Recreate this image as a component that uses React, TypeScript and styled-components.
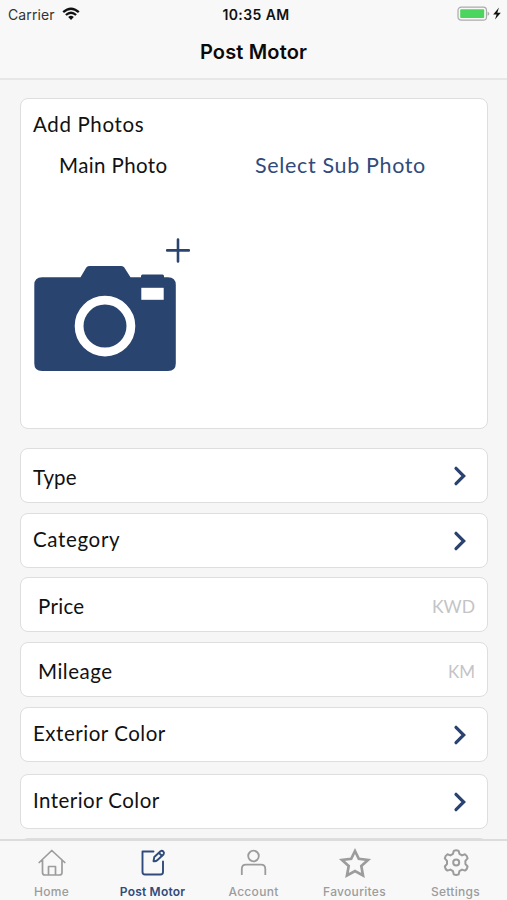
import React from "react";
import styled, { createGlobalStyle } from "styled-components";

const NAVY = "#2a4470";

const GlobalStyle = createGlobalStyle`
  *, *::before, *::after { box-sizing: border-box; }
  body { margin: 0; background: #f6f6f6; font-family: Lato, "Open Sans", sans-serif; }
`;

const Screen = styled.div`
  width: 507px;
  height: 900px;
  display: flex;
  flex-direction: column;
  overflow: hidden;
  background: #f6f6f6;
  color: #111;
`;

const Header = styled.header`
  flex: none;
  height: 80px;
  background: #f8f8f8;
  border-bottom: 2px solid #e7e7e7;
  font-family: Inter, sans-serif;
`;

const StatusBar = styled.div`
  height: 28px;
  padding: 0 5px 0 8px;
  display: grid;
  grid-template-columns: 1fr auto 1fr;
  align-items: center;
`;

const Carrier = styled.div`
  display: flex;
  align-items: center;
  gap: 7px;
  font-size: 14px;
  letter-spacing: 0.1px;
  color: #333;
`;

const Clock = styled.div`
  font-size: 14px;
  font-weight: 600;
  letter-spacing: 0.4px;
  padding-left: 2px;
`;

const Battery = styled.div`
  display: flex;
  justify-content: flex-end;
`;

const Title = styled.h1`
  margin: 0;
  padding-top: 11px;
  font-size: 20px;
  line-height: 26px;
  font-weight: 600;
  letter-spacing: 0.15px;
  text-align: center;
  color: #0a0a0a;
`;

const Content = styled.main`
  flex: 1;
  min-height: 0;
  overflow: hidden;
  padding: 18px 19px 0 20px;
`;

const Card = styled.section`
  background: #fff;
  border: 1px solid #dedede;
  border-radius: 8px;
`;

const PhotoCard = styled(Card)`
  height: 331px;
  padding: 11px 12px 0;
`;

const Label = styled.span<{ $spacing?: number; $color?: string; $size?: number }>`
  font-size: ${(p) => p.$size ?? 20.5}px;
  line-height: 28px;
  white-space: nowrap;
  letter-spacing: ${(p) => p.$spacing ?? 0.3}px;
  color: ${(p) => p.$color ?? "#111"};
`;

const PhotoHeadings = styled.div`
  display: grid;
  grid-template-columns: 196px 1fr;
  padding: 13px 0 0 26px;
`;

const PhotoPicker = styled.div`
  margin-top: 56px;
  height: 140px;
`;

const Rows = styled.div`
  display: flex;
  flex-direction: column;
  padding-top: 19px;
`;

const Row = styled(Card)<{ $gap?: number; $inset?: number; $drop?: number; $lift?: number }>`
  flex: none;
  height: 55px;
  margin-bottom: ${(p) => p.$gap ?? 10}px;
  padding: 0 12px 0 ${(p) => p.$inset ?? 12}px;
  display: flex;
  align-items: center;
  justify-content: space-between;

  & > ${Label} {
    padding-top: ${(p) => p.$drop ?? 0}px;
    padding-bottom: ${(p) => p.$lift ?? 0}px;
  }
`;

const ClippedLabel = styled(Label)`
  height: 26px;
  line-height: 29px;
  overflow: hidden;
`;

const Unit = styled.span<{ $size: number }>`
  font-size: ${(p) => p.$size}px;
  line-height: 24px;
  padding-top: 5px;
  color: #c4c4c6;
`;

const TabBar = styled.nav`
  flex: none;
  height: 61px;
  display: grid;
  grid-template-columns: repeat(5, 101px);
  background: #f8f8f8;
  border-top: 2px solid #dcdcdc;
  font-family: Inter, sans-serif;
`;

const Tab = styled.a<{ $active?: boolean }>`
  display: flex;
  flex-direction: column;
  align-items: center;
  padding: 4px 0 0 2px;
  color: ${(p) => (p.$active ? "#304b7b" : "#9c9c9c")};
  font-size: 12px;
  line-height: 16px;
  font-weight: ${(p) => (p.$active ? 600 : 500)};
  letter-spacing: ${(p) => (p.$active ? 0.2 : 0.3)}px;
  white-space: nowrap;
  gap: 5px;
`;

const Icon = styled.svg`
  display: block;
  flex: none;
  overflow: visible;
`;

const Arrow = styled(Icon)`
  margin-right: 8px;
`;

const Chevron = () => (
  <Arrow width="14" height="20" viewBox="0 0 14 20" fill="none" stroke="#29426f" strokeWidth="3.2" strokeLinecap="round">
    <path d="M3 2.300 10.700 10 3 17.700" />
  </Arrow>
);

const CameraIcon = () => (
  <Icon width="160" height="140" viewBox="33 235 160 140">
    <path
      fill={NAVY}
      d="M42 277.3H80.5L86.3 267.5Q87.200 266 89 266H121.500Q123.300 266 124.300 267.500L130.500 277.300H141V276Q141 274.500 142.500 274.500H162.500Q164 274.500 164 276V277.300H168Q175.800 277.300 175.800 285V363.500Q175.800 371 168 371H42Q34.300 371 34.300 363.500V285Q34.300 277.300 42 277.300Z"
    />
    <circle cx="105" cy="326.100" r="25.900" fill="none" stroke="#fff" strokeWidth="8.800" />
    <rect x="141.300" y="287.800" width="22.400" height="12" fill="#fff" />
    <path d="M167.200 250.400H188.800M178 239.500V261.400" fill="none" stroke={NAVY} strokeWidth="2.600" strokeLinecap="round" />
  </Icon>
);

interface SelectRowProps {
  label: string;
  gap?: number;
  drop?: number;
  lift?: number;
  spacing?: number;
}

const SelectRow = ({ label, gap, drop, lift, spacing }: SelectRowProps) => (
  <Row $gap={gap} $drop={drop} $lift={lift}>
    <Label $spacing={spacing}>{label}</Label>
    <Chevron />
  </Row>
);

const TabIcon = ({ children, width = 1.8 }: { children: React.ReactNode; width?: number }) => (
  <Icon width="34" height="34" viewBox="0 0 34 34" fill="none" stroke="currentColor" strokeWidth={width} strokeLinecap="round" strokeLinejoin="round">
    {children}
  </Icon>
);

export default function App() {
  return (
    <>
      <GlobalStyle />
      <Screen>
        <Header>
          <StatusBar>
            <Carrier>
              Carrier
              <Icon width="18" height="14" viewBox="0 0 18 14" fill="none" stroke="#111" strokeWidth="2.3">
                <path d="M1.200 5.200Q9-1.800 16.800 5.200M3.900 8Q9 3.600 14.100 8" />
                <path d="M6.200 10Q9 7.400 11.800 10L9 12.900Z" fill="#111" stroke="none" />
              </Icon>
            </Carrier>
            <Clock>10:35 AM</Clock>
            <Battery>
              <Icon width="46" height="16" viewBox="0 0 46 16">
                <rect x="2" y="1.200" width="28.500" height="13" rx="3.200" fill="#f8f8f8" stroke="#ababab" strokeWidth="1.200" />
                <rect x="4.200" y="3.300" width="24" height="8.800" rx="1" fill="#4cd55e" />
                <path d="M31.600 5.700Q33.300 6.300 33.300 7.700T31.600 9.700Z" fill="#aaa" />
                <path d="M43 1.600 37.200 8.500H40.600L39 13.600 44.800 6.800H41.300Z" fill="#111" />
              </Icon>
            </Battery>
          </StatusBar>
          <Title>Post Motor</Title>
        </Header>
        <Content>
          <PhotoCard>
            <Label $spacing={0.65}>Add Photos</Label>
            <PhotoHeadings>
              <Label $spacing={0.4}>Main Photo</Label>
              <Label $size={21.5} $spacing={0.65} $color="#304b7b">Select Sub Photo</Label>
            </PhotoHeadings>
            <PhotoPicker>
              <CameraIcon />
            </PhotoPicker>
          </PhotoCard>
          <Rows>
            <SelectRow label="Type" drop={2} spacing={0.1} />
            <SelectRow label="Category" gap={9} lift={4} spacing={0.65} />
            <Row $inset={17} $drop={3}>
              <Label>Price</Label>
              <Unit $size={17.5}>KWD</Unit>
            </Row>
            <Row $inset={17}>
              <ClippedLabel $spacing={0.5}>Mileage</ClippedLabel>
              <Unit $size={17}>KM</Unit>
            </Row>
            <SelectRow label="Exterior Color" gap={12} lift={4} spacing={0.52} />
            <SelectRow label="Interior Color" gap={9} lift={4} spacing={0.45} />
            <Row />
          </Rows>
        </Content>
        <TabBar>
          <Tab>
            <TabIcon width={1.7}>
              <path d="M4.200 17.500 16.800 5.500 29.800 17.500M7.500 15V27.500Q7.500 30 10 30H24.500Q27 30 27 27.500V15M13.500 30V21.500H20.500V30" />
            </TabIcon>
            Home
          </Tab>
          <Tab $active>
            <TabIcon width={1.9}>
              <path d="M17.500 6.500H6.500V27Q6.500 29.500 9 29.500H24.500Q27 29.500 27 27V16.500" />
              <path d="M17.500 16.200 18.300 12 24.500 6.200Q26 5.200 27.300 6.500T27.500 9.500L21.500 15Q20 16.500 17.500 16.200ZM22.900 7.800 26 11" />
            </TabIcon>
            Post Motor
          </Tab>
          <Tab>
            <TabIcon width={1.8}>
              <circle cx="16.500" cy="11" r="5.300" />
              <path strokeLinecap="butt" d="M4.800 30V24Q4.800 19.700 9 19.700H24Q28.300 19.700 28.300 24V30" />
            </TabIcon>
            Account
          </Tab>
          <Tab>
            <TabIcon width={2.7}>
              <path strokeLinejoin="miter" d="M17 6 20.800 13.800 30 14.900 23.300 21 25 30.500 17 26 9 30.500 10.700 21 4 14.900 13.200 13.800Z" />
            </TabIcon>
            Favourites
          </Tab>
          <Tab>
            <TabIcon width={2}>
              <path d="M14 8.800 14.800 5.800Q17.200 4.600 19.600 5.800L20.400 8.800 23 10.400 26 9.300Q28.200 10.600 28.600 13.300L26.400 15.800V19L28.600 21.500Q28.200 24.200 26 25.600L23 24.600 20.400 26.200 19.600 29.400Q17.200 30.600 14.800 29.400L14 26.200 11.400 24.600 8.400 25.600Q6.200 24.200 5.800 21.500L8 19V15.800L5.800 13.300Q6.200 10.600 8.400 9.300L11.400 10.400Z" />
              <circle cx="17.200" cy="17.400" r="3" />
            </TabIcon>
            Settings
          </Tab>
        </TabBar>
      </Screen>
    </>
  );
}
